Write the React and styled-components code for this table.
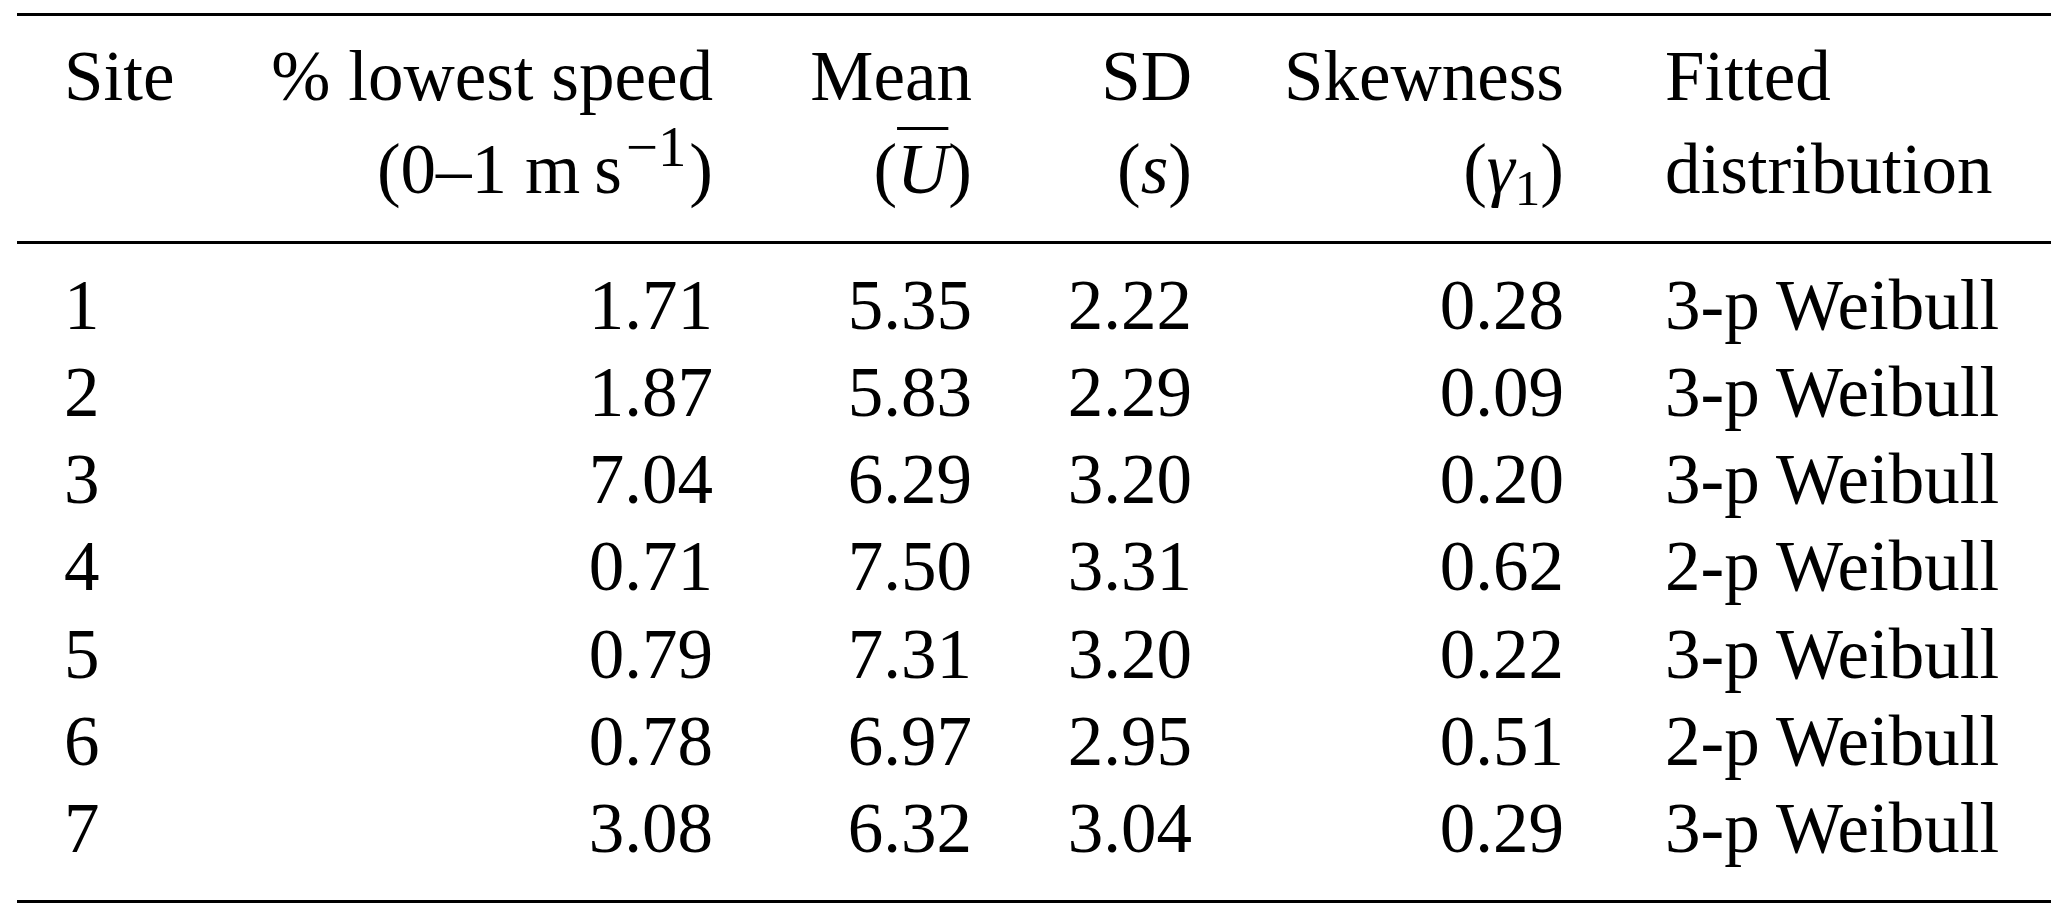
import React from 'react';
import styled, { createGlobalStyle } from 'styled-components';

const Global = createGlobalStyle`
  html, body { margin: 0; padding: 0; background: #ffffff; }
  body {
    font-family: "Liberation Serif", "Times New Roman", serif;
    color: #000000;
  }
`;

const Page = styled.div`
  width: 2067px;
  box-sizing: border-box;
  padding: 13px 16px 0 17px;
`;

const Table = styled.table`
  width: 2034px;
  table-layout: fixed;
  border-collapse: separate;
  border-spacing: 0;
  font-size: 71px;
  border-top: 3px solid #000;
  border-bottom: 3px solid #000;
`;

const Col = styled.col`
  width: ${(p) => p.$w}px;
`;

const Head = styled.th`
  font-weight: normal;
  vertical-align: top;
  white-space: nowrap;
  line-height: 93px;
  padding: 13.5px ${(p) => p.$pr || 0}px 25.5px ${(p) => p.$pl || 0}px;
  text-align: ${(p) => p.$align};
  border-bottom: 3px solid #000;
`;

const Body = styled.tbody`
  & tr:first-child td { padding-top: 17.7px; }
  & tr:last-child td { padding-bottom: 28px; }
`;

const Cell = styled.td`
  line-height: 87.2px;
  white-space: nowrap;
  padding: 0 ${(p) => p.$pr || 0}px 0 ${(p) => p.$pl || 0}px;
  text-align: ${(p) => p.$align};
`;

const Var = styled.i`
  font-style: italic;
`;

const Bar = styled.i`
  font-style: italic;
  text-decoration: overline;
  text-decoration-thickness: 3px;
`;

const Gap = styled.span`
  display: inline-block;
  width: ${(p) => p.$w}px;
`;

const Sup = styled.span`
  font-size: 0.8em;
  line-height: 0;
  vertical-align: 0.46em;
  margin-left: 4px;
  margin-right: 3px;
`;

const Sub = styled.span`
  font-size: 0.72em;
  line-height: 0;
  vertical-align: -0.24em;
`;

const columns = [
  { w: 233, align: 'left', pl: 47 },
  { w: 463, align: 'right' },
  { w: 259, align: 'right' },
  { w: 220, align: 'right' },
  { w: 372, align: 'right' },
  { w: 487, align: 'left', pl: 101 },
];

const headers = [
  <>Site</>,
  <>% lowest speed<br />(0–1<Gap $w={18} />m<Gap $w={14} />s<Sup>−1</Sup>)</>,
  <>Mean<br />(<Bar>U</Bar>)</>,
  <>SD<br />(<Var>s</Var>)</>,
  <>Skewness<br />(<Var>γ</Var><Sub>1</Sub>)</>,
  <>Fitted<br />distribution</>,
];

const rows = [
  ['1', '1.71', '5.35', '2.22', '0.28', '3-p Weibull'],
  ['2', '1.87', '5.83', '2.29', '0.09', '3-p Weibull'],
  ['3', '7.04', '6.29', '3.20', '0.20', '3-p Weibull'],
  ['4', '0.71', '7.50', '3.31', '0.62', '2-p Weibull'],
  ['5', '0.79', '7.31', '3.20', '0.22', '3-p Weibull'],
  ['6', '0.78', '6.97', '2.95', '0.51', '2-p Weibull'],
  ['7', '3.08', '6.32', '3.04', '0.29', '3-p Weibull'],
];

export default function App() {
  return (
    <Page>
      <Global />
      <Table>
        <colgroup>
          {columns.map((c, i) => (
            <Col key={i} $w={c.w} />
          ))}
        </colgroup>
        <thead>
          <tr>
            {headers.map((h, i) => (
              <Head key={i} $align={columns[i].align} $pl={columns[i].pl} $pr={columns[i].pr}>
                {h}
              </Head>
            ))}
          </tr>
        </thead>
        <Body>
          {rows.map((r, ri) => (
            <tr key={ri}>
              {r.map((v, ci) => (
                <Cell key={ci} $align={columns[ci].align} $pl={columns[ci].pl} $pr={columns[ci].pr}>
                  {v}
                </Cell>
              ))}
            </tr>
          ))}
        </Body>
      </Table>
    </Page>
  );
}
